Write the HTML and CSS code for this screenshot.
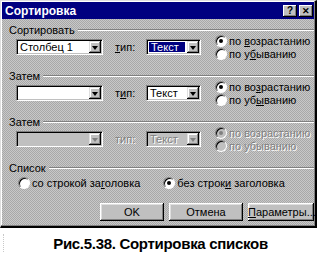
FILE: index.html
```html
<!DOCTYPE html>
<html lang="ru">
<head>
    <meta charset="UTF-8">
    <title>Сортировка</title>
    <link rel="stylesheet" href="styles.css">
</head>
<body>
    <div class="dialog">
        <div class="titlebar">
            <span class="title">Сортировка</span>
            <div class="title-buttons">
                <span class="tbtn">?</span>
                <span class="tbtn close">&#x2715;</span>
            </div>
        </div>
        <div class="content">
            <div class="group-head"><span>Сортировать</span><span class="rule"></span></div>
            <div class="sort-row">
                <div class="combo col"><span class="value">Столбец 1</span><span class="drop"><i></i></span></div>
                <span class="type-label"><u>т</u>ип:</span>
                <div class="combo kind"><span class="value selected">Текст</span><span class="drop"><i></i></span></div>
                <div class="radios">
                    <div class="radio checked"><span class="dot"></span><span>по <u>в</u>озрастанию</span></div>
                    <div class="radio"><span class="dot"></span><span>по у<u>б</u>ыванию</span></div>
                </div>
            </div>

            <div class="group-head"><span>Затем</span><span class="rule"></span></div>
            <div class="sort-row">
                <div class="combo col"><span class="value"></span><span class="drop"><i></i></span></div>
                <span class="type-label">т<u>и</u>п:</span>
                <div class="combo kind"><span class="value">Текст</span><span class="drop"><i></i></span></div>
                <div class="radios">
                    <div class="radio checked"><span class="dot"></span><span>по во<u>з</u>растанию</span></div>
                    <div class="radio"><span class="dot"></span><span>по уб<u>ы</u>ванию</span></div>
                </div>
            </div>

            <div class="group-head"><span>Затем</span><span class="rule"></span></div>
            <div class="sort-row disabled">
                <div class="combo col"><span class="value"></span><span class="drop"><i></i></span></div>
                <span class="type-label">тип:</span>
                <div class="combo kind"><span class="value">Текст</span><span class="drop"><i></i></span></div>
                <div class="radios">
                    <div class="radio checked"><span class="dot"></span><span>по возрастанию</span></div>
                    <div class="radio"><span class="dot"></span><span>по убыванию</span></div>
                </div>
            </div>

            <div class="group-head"><span>Список</span><span class="rule"></span></div>
            <div class="list-row">
                <div class="radio"><span class="dot"></span><span>со строкой за<u>г</u>оловка</span></div>
                <div class="radio checked"><span class="dot"></span><span>без строк<u>и</u> заголовка</span></div>
            </div>

            <div class="buttons">
                <button class="ok">OK</button>
                <button class="cancel">Отмена</button>
                <button class="params"><u>П</u>араметры...</button>
            </div>
        </div>
    </div>
    <div class="caption-row">
        <span class="mark"></span>
        <div class="caption">Рис.5.38. Сортировка списков</div>
    </div>
</body>
</html>
```

FILE: styles.css
```css
body {
    margin: 0;
    background-color: #ffffff;
    font-family: 'Liberation Sans', Arial, sans-serif;
    font-size: 11px;
    color: #000;
}

.dialog {
    width: 312px;
    height: 223px;
    background: repeating-conic-gradient(#c8c8c8 0 25%, #a8a8a8 0 50%) 0 0 / 2px 2px;
    border-top: 1px solid #dfdfdf;
    border-left: 1px solid #dfdfdf;
    border-right: 2px solid #000;
    border-bottom: 2px solid #000;
    box-shadow: inset -1px -1px 0 #808080, inset 1px 1px 0 #ffffff;
    padding: 1px;
}

.titlebar {
    height: 17px;
    background-color: #000080;
    color: #fff;
    display: flex;
    align-items: center;
    justify-content: space-between;
    padding: 0 1px 0 3px;
}

.title {
    font-weight: bold;
    font-size: 12px;
}

.title-buttons {
    display: flex;
    gap: 2px;
}

.tbtn {
    width: 14px;
    height: 12px;
    background-color: #c0c0c0;
    color: #000;
    font-weight: bold;
    font-size: 10px;
    line-height: 12px;
    text-align: center;
    box-shadow: inset -1px -1px 0 #000, inset 1px 1px 0 #fff, inset -2px -2px 0 #808080;
}

.tbtn.close {
    font-size: 9px;
}

.content {
    padding: 5px 0 0 7px;
}

.group-head {
    display: flex;
    align-items: center;
    gap: 3px;
    height: 12px;
}

.group-head .rule {
    flex: 1;
    height: 0;
    border-top: 1px solid #808080;
    border-bottom: 1px solid #ffffff;
}

.sort-row {
    display: flex;
    align-items: flex-start;
    margin-left: 7px;
    height: 34px;
}

.combo {
    box-sizing: border-box;
    height: 16px;
    margin-top: 3px;
    background-color: #fff;
    display: flex;
    align-items: center;
    border-top: 1px solid #808080;
    border-left: 1px solid #808080;
    border-right: 1px solid #fff;
    border-bottom: 1px solid #fff;
    box-shadow: inset 1px 1px 0 #000, inset -1px -1px 0 #c0c0c0;
    padding: 1px;
}

.combo.col {
    width: 87px;
}

.combo.kind {
    width: 55px;
}

.value {
    flex: 1;
    align-self: stretch;
    display: flex;
    align-items: center;
    padding-left: 2px;
    white-space: nowrap;
    overflow: hidden;
}

.value.selected {
    background-color: #000080;
    color: #fff;
    margin: 1px 2px 1px 1px;
    padding-left: 2px;
}

.drop {
    width: 12px;
    height: 12px;
    background-color: #c0c0c0;
    box-shadow: inset -1px -1px 0 #000, inset 1px 1px 0 #dfdfdf, inset -2px -2px 0 #808080, inset 2px 2px 0 #fff;
    display: flex;
    align-items: center;
    justify-content: center;
}

.drop i {
    width: 0;
    height: 0;
    margin-top: 1px;
    border-left: 3.5px solid transparent;
    border-right: 3.5px solid transparent;
    border-top: 4px solid #000;
}

.type-label {
    width: 31px;
    margin-left: 12px;
    margin-top: 5px;
}

.radios {
    display: flex;
    flex-direction: column;
    gap: 1px;
    margin-left: 14px;
    margin-top: -1px;
}

.radio {
    display: flex;
    align-items: center;
    gap: 2px;
    height: 12px;
    white-space: nowrap;
}

.dot {
    width: 12px;
    height: 12px;
    border-radius: 50%;
    box-sizing: border-box;
    background-color: #fff;
    border: 1px solid;
    border-color: #808080 #fff #fff #808080;
    box-shadow: inset 1px 1px 0 #000;
    display: flex;
    align-items: center;
    justify-content: center;
}

.radio.checked .dot::after {
    content: '';
    width: 4px;
    height: 4px;
    border-radius: 50%;
    background-color: #000;
}

.disabled {
    color: #808080;
    text-shadow: 1px 1px 0 #fff;
}

.disabled .combo,
.disabled .dot {
    background-color: #c0c0c0;
}

.disabled .value {
    color: #808080;
}

.disabled .drop i {
    border-top-color: #808080;
}

.disabled .radio.checked .dot::after {
    background-color: #808080;
}

.list-row {
    display: flex;
    gap: 23px;
    margin: 3px 0 0 9px;
}

.buttons {
    display: flex;
    justify-content: flex-end;
    gap: 5px;
    margin-top: 14px;
}

.buttons button {
    height: 18px;
    font-family: inherit;
    font-size: 11px;
    color: #000;
    background-color: #c0c0c0;
    border: none;
    padding: 0;
    box-shadow: inset -1px -1px 0 #000, inset 1px 1px 0 #fff, inset -2px -2px 0 #808080, inset 2px 2px 0 #dfdfdf;
}

.buttons .ok {
    width: 64px;
}

.buttons .cancel {
    width: 74px;
}

.buttons .params {
    width: 66px;
}

.caption-row {
    display: flex;
    align-items: center;
    width: 317px;
    margin-top: 6px;
}

.mark {
    width: 0;
    height: 18px;
    margin-left: 3px;
    border-left: 1px dotted #c8c8c8;
}

.caption {
    flex: 1;
    text-align: center;
    font-weight: bold;
    font-size: 15px;
    letter-spacing: -0.3px;
}
```
